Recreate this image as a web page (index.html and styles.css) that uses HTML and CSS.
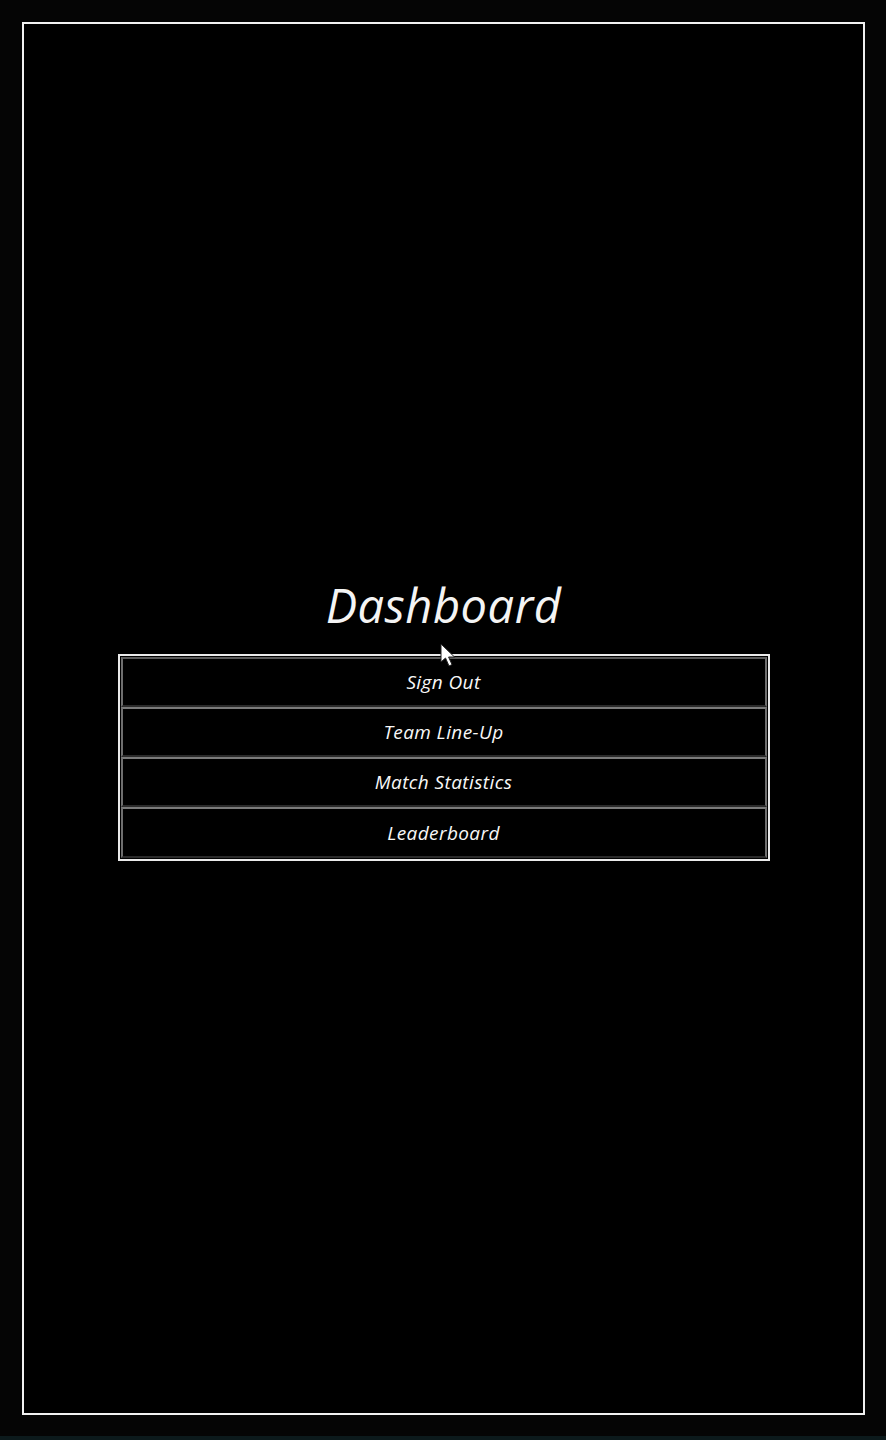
FILE: index.html
```html
<!DOCTYPE html>
<html lang="en">
<head>
<meta charset="utf-8">
<title>Dashboard</title>
<link rel="stylesheet" href="styles.css">
</head>
<body>
<div class="frame">
  <main class="content">
    <h1 class="title">Dashboard</h1>
    <nav class="menu">
      <a class="item" href="#">Sign Out</a>
      <a class="item" href="#">Team Line-Up</a>
      <a class="item" href="#">Match Statistics</a>
      <a class="item" href="#">Leaderboard</a>
    </nav>
  </main>
</div>
<div class="strip"></div>
<svg class="cursor" width="16" height="26" viewBox="0 0 16 26"><path d="M1 1 L1 19 L5.5 15 L9 23 L12 21.6 L8.6 14 L14.5 14 Z" fill="#fff" stroke="#222" stroke-width="1"/></svg>
</body>
</html>
```
FILE: styles.css
```css
html, body {
  margin: 0;
  padding: 0;
  background: #050505;
}
body {
  width: 886px;
  height: 1440px;
  display: flex;
  flex-direction: column;
  position: relative;
  font-family: "Open Sans", "Noto Sans", sans-serif;
}
.frame {
  margin: 22px 21px 0 22px;
  height: 1389px;
  border: 2px solid #f2f2f2;
  background: #000;
  display: flex;
  align-items: center;
  justify-content: center;
}
.content {
  display: flex;
  flex-direction: column;
  align-items: center;
  margin-top: 1px;
}
.title {
  margin: 0 0 21px 0;
  font-size: 47px;
  font-weight: 400;
  font-style: italic;
  color: #f4f4f4;
  line-height: 56px;
  letter-spacing: 0.5px;
}
.menu {
  width: 646px;
  border: 2px solid #eaeaea;
  padding: 1px;
  display: flex;
  flex-direction: column;
}
.item {
  display: flex;
  align-items: center;
  justify-content: center;
  height: 46px;
  border: 2px solid #6e6e6e;
  border-top-color: #5a5a5a;
  border-bottom-color: #2a2a2a;
  color: #f8f8f8;
  text-decoration: none;
  font-size: 19px;
  font-weight: 500;
  font-style: italic;
  letter-spacing: 0.4px;
}
.item:last-child {
  height: 47px;
}
.item + .item {
  border-top: 2px solid #7a7a7a;
}
.strip {
  margin-top: auto;
  height: 4px;
  background: #0c1a1c;
}
.cursor {
  position: absolute;
  left: 440px;
  top: 643px;
}
```
